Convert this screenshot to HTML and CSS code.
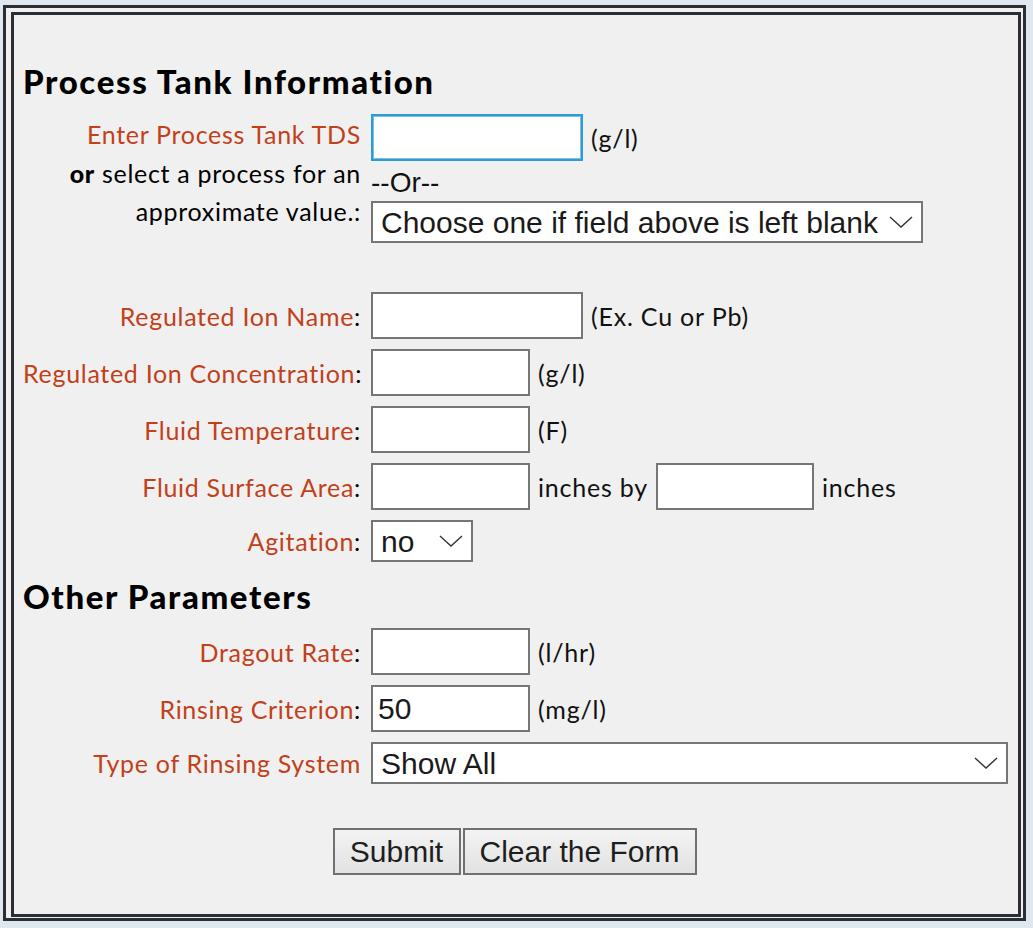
FILE: index.html
```html
<!DOCTYPE html>
<html>
<head>
<meta charset="utf-8">
<title>Rinse Calculator</title>
<link rel="stylesheet" href="styles.css">
</head>
<body>
<div class="page">
  <div class="frame">
    <form class="panel">
      <h2 class="section">Process Tank Information</h2>

      <div class="row">
        <label class="lbl lbl-first red">Enter Process Tank TDS</label>
        <div class="fld"><input class="inp w212 focus" type="text"><span class="unit">(g/l)</span></div>
      </div>

      <div class="row row-choice">
        <div class="lbl lbl-multi"><b>or</b> select a process for an<br>approximate value.:</div>
        <div class="fld fld-col">
          <span class="or">--Or--</span>
          <span class="sel-wrap"><select class="sel w552"><option>Choose one if field above is left blank</option></select><svg class="chev" viewBox="0 0 24 12"><polyline points="1,1 12,11 23,1"/></svg></span>
        </div>
      </div>

      <div class="row row-ion">
        <label class="lbl"><span class="red">Regulated Ion Name</span>:</label>
        <div class="fld"><input class="inp w212" type="text"><span class="unit">(Ex. Cu or Pb)</span></div>
      </div>

      <div class="row gap10">
        <label class="lbl"><span class="red">Regulated Ion Concentration</span>:</label>
        <div class="fld"><input class="inp w159" type="text"><span class="unit">(g/l)</span></div>
      </div>

      <div class="row gap10">
        <label class="lbl"><span class="red">Fluid Temperature</span>:</label>
        <div class="fld"><input class="inp w159" type="text"><span class="unit">(F)</span></div>
      </div>

      <div class="row gap10">
        <label class="lbl"><span class="red">Fluid Surface Area</span>:</label>
        <div class="fld"><input class="inp w159" type="text"><span class="unit">inches by</span><input class="inp w158" type="text"><span class="unit">inches</span></div>
      </div>

      <div class="row gap10">
        <label class="lbl"><span class="red">Agitation</span>:</label>
        <div class="fld"><span class="sel-wrap"><select class="sel w102"><option>no</option><option>yes</option></select><svg class="chev" viewBox="0 0 24 12"><polyline points="1,1 12,11 23,1"/></svg></span></div>
      </div>

      <h2 class="section section-2">Other Parameters</h2>

      <div class="row row-drag">
        <label class="lbl"><span class="red">Dragout Rate</span>:</label>
        <div class="fld"><input class="inp w159" type="text"><span class="unit">(l/hr)</span></div>
      </div>

      <div class="row gap10">
        <label class="lbl"><span class="red">Rinsing Criterion</span>:</label>
        <div class="fld"><input class="inp w159" type="text" value="50"><span class="unit">(mg/l)</span></div>
      </div>

      <div class="row gap10">
        <label class="lbl"><span class="red">Type of Rinsing System</span></label>
        <div class="fld"><span class="sel-wrap"><select class="sel w637"><option>Show All</option></select><svg class="chev" viewBox="0 0 24 12"><polyline points="1,1 12,11 23,1"/></svg></span></div>
      </div>

      <div class="buttons">
        <button type="button" class="btn btn-submit">Submit</button><button type="reset" class="btn btn-clear">Clear the Form</button>
      </div>
    </form>
  </div>
</div>
</body>
</html>
```

FILE: styles.css
```css
html, body {
  margin: 0;
  background: #dfe7ef;
}

body {
  font-family: Lato, "Open Sans", "Liberation Sans", sans-serif;
  color: #111;
}

.page {
  padding: 5px 7px 7px 3px;
}

.frame {
  border: 3px solid #2b2e34;
  padding: 4px 2px 1px 5px;
  background: #f0f0f0;
}

.panel {
  display: block;
  margin: 0;
  border: 3px solid #2b2e34;
  background: #f0f0f0;
  padding: 46px 0 39px 9px;
}

.section {
  margin: 0;
  font-size: 33px;
  line-height: 40px;
  font-weight: 900;
  color: #000;
  letter-spacing: 1.6px;
}

.section-2 {
  margin-top: 14px;
}

.row {
  display: flex;
  align-items: center;
  gap: 10px;
  margin-top: 13px;
}

.gap10 { margin-top: 10px; }
.row-choice { margin-top: 7px; align-items: flex-start; }
.row-ion { margin-top: 49px; }
.row-drag { margin-top: 12px; }

.lbl {
  width: 338px;
  flex: none;
  text-align: right;
  font-size: 25px;
  letter-spacing: 0.7px;
  line-height: 30px;
  color: #000;
  white-space: nowrap;
}

.lbl-first {
  margin-top: -8px;
}

.red { color: #c2401a; }

.lbl-multi {
  line-height: 38px;
  margin-top: -14px;
}

.lbl-multi b { font-weight: 900; }

.fld {
  display: flex;
  align-items: center;
  gap: 8px;
}

.fld-col {
  flex-direction: column;
  align-items: flex-start;
  gap: 3px;
}

.or {
  font-family: "Liberation Sans", Arial, sans-serif;
  font-size: 28px;
  line-height: 30px;
  color: #111;
}

.unit {
  font-size: 25px;
  letter-spacing: 0.8px;
  line-height: 30px;
  color: #111;
  white-space: nowrap;
}

.inp {
  box-sizing: border-box;
  height: 47px;
  margin: 0;
  border: 2px solid #767676;
  background: #fff;
  padding: 0 5px;
  font-family: "Liberation Sans", Arial, sans-serif;
  font-size: 30px;
  color: #1a1a1a;
  outline: none;
}

.inp.focus {
  border-color: #2f9ad8;
  box-shadow: 0 0 0 1px #7cc0e8 inset;
}

.w212 { width: 212px; }
.w159 { width: 159px; }
.w158 { width: 158px; }
.w102 { width: 102px; }
.w552 { width: 552px; }
.w637 { width: 637px; }

.sel-wrap {
  position: relative;
  display: inline-block;
  line-height: 0;
}

.sel {
  -webkit-appearance: none;
  appearance: none;
  box-sizing: border-box;
  height: 42px;
  margin: 0;
  border: 2px solid #767676;
  border-radius: 0;
  background: #fff;
  padding: 0 40px 0 8px;
  font-family: "Liberation Sans", Arial, sans-serif;
  font-size: 30px;
  color: #1a1a1a;
  outline: none;
}

.chev {
  position: absolute;
  right: 10px;
  top: 15px;
  width: 24px;
  height: 12px;
  pointer-events: none;
  fill: none;
  stroke: #333;
  stroke-width: 1.4;
}

.buttons {
  display: flex;
  justify-content: center;
  gap: 2px;
  margin-top: 44px;
  padding-right: 12px;
}

.btn {
  box-sizing: border-box;
  height: 47px;
  margin: 0;
  border: 2px solid #707070;
  border-radius: 0;
  background: linear-gradient(#f3f3f3, #e2e2e2);
  font-family: "Liberation Sans", Arial, sans-serif;
  font-size: 30px;
  color: #1e1e1e;
  padding: 0;
}

.btn-submit { width: 128px; }
.btn-clear { width: 234px; }
```
